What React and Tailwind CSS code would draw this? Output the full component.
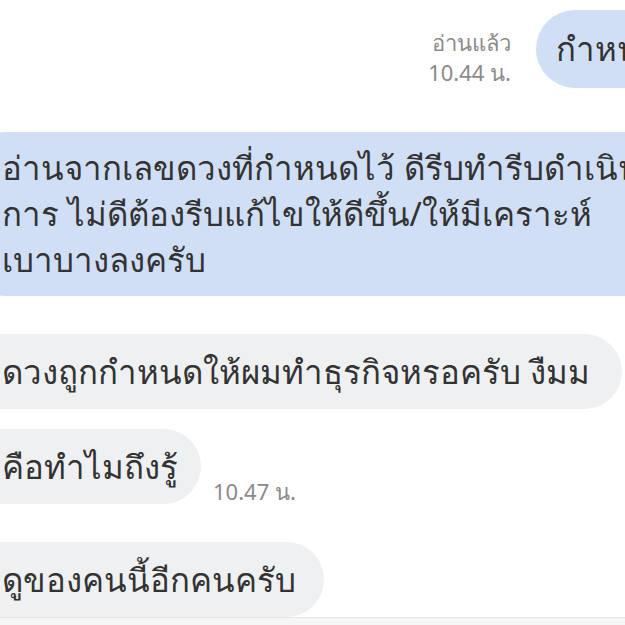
import React from 'react';

const font = { fontFamily: '"Noto Sans", "Liberation Sans", sans-serif' };

const Bubble = ({ children, className = '' }) => (
  <div
    className={`-ml-[25px] pl-[27px] pr-[28px] h-[75px] flex items-center rounded-r-[38px] bg-[#eff0f2] text-[#333] text-[33px] whitespace-nowrap ${className}`}
  >
    {children}
  </div>
);

export default function App() {
  return (
    <div className="w-[625px] h-[625px] overflow-hidden bg-white flex flex-col text-[#333]" style={font}>
      {/* Sent message with read receipt */}
      <div className="flex items-end justify-end gap-[25px] mt-[10px] -mr-[102px]">
        <div className="text-right text-[#8a8a8a] text-[22px] leading-[30px] pb-[1px]">
          <div>อ่านแล้ว</div>
          <div>10.44 น.</div>
        </div>
        <div className="h-[78px] pl-[20px] pr-[30px] flex items-center rounded-l-[39px] bg-[#d0dff6] text-[33px] whitespace-nowrap">
          กำหนดไว้
        </div>
      </div>

      {/* Long sent message */}
      <div className="mt-[44px] -ml-[25px] -mr-[60px] pl-[27px] py-[13px] rounded-[30px] bg-[#d0dff6] text-[33px] leading-[46px]">
        <div className="whitespace-nowrap">อ่านจากเลขดวงที่กำหนดไว้ ดีรีบทำรีบดำเนิน</div>
        <div className="whitespace-nowrap">การ ไม่ดีต้องรีบแก้ไขให้ดีขึ้น/ให้มีเคราะห์</div>
        <div className="whitespace-nowrap">เบาบางลงครับ</div>
      </div>

      {/* Received messages */}
      <div className="mt-[38px] flex flex-col">
        <div className="flex">
          <Bubble className="pr-[32px]">ดวงถูกกำหนดให้ผมทำธุรกิจหรอครับ งืมม</Bubble>
        </div>
        <div className="flex items-end gap-[12px] mt-[20px]">
          <Bubble className="!pr-[23px]">คือทำไมถึงรู้</Bubble>
          <span className="text-[22px] text-[#8a8a8a] leading-none pb-[2px]">10.47 น.</span>
        </div>
        <div className="flex mt-[38px]">
          <Bubble>ดูของคนนี้อีกคนครับ</Bubble>
        </div>
      </div>

      <div className="flex-1 border-t border-[#e4e4e4] bg-[#f6f6f6]" />
    </div>
  );
}
